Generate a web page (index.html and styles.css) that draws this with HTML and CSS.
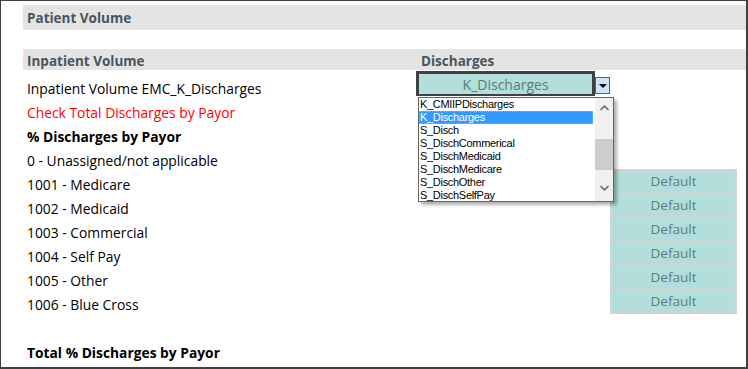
FILE: index.html
```html
<!DOCTYPE html>
<html lang="en">
<head>
    <meta charset="UTF-8">
    <title>Patient Volume</title>
    <link rel="stylesheet" href="styles.css">
</head>
<body>
    <div class="frame">
        <div class="band band-top">
            <span class="band-title">Patient Volume</span>
        </div>
        <div class="band band-sub">
            <span class="band-title col-a">Inpatient Volume</span>
            <span class="band-title col-b">Discharges</span>
        </div>

        <div class="row">
            <div class="label">Inpatient Volume EMC_K_Discharges</div>
            <div class="combo-wrap">
                <div class="combo-value">K_Discharges</div>
                <div class="combo-btn"><span class="tri"></span></div>
                <!-- open dropdown list -->
                <div class="drop-list">
                    <ul class="items">
                        <li>K_CMIIPDischarges</li>
                        <li class="selected">K_Discharges</li>
                        <li>S_Disch</li>
                        <li>S_DischCommerical</li>
                        <li>S_DischMedicaid</li>
                        <li>S_DischMedicare</li>
                        <li>S_DischOther</li>
                        <li>S_DischSelfPay</li>
                    </ul>
                    <div class="scrollbar">
                        <div class="sb-up">
                            <svg width="9" height="6" viewBox="0 0 9 6"><polyline points="0.5,5 4.5,1 8.5,5" fill="none" stroke="#606060" stroke-width="1.4"/></svg>
                        </div>
                        <div class="sb-thumb"></div>
                        <div class="sb-track"></div>
                        <div class="sb-down">
                            <svg width="9" height="6" viewBox="0 0 9 6"><polyline points="0.5,1 4.5,5 8.5,1" fill="none" stroke="#606060" stroke-width="1.4"/></svg>
                        </div>
                    </div>
                </div>
            </div>
        </div>
        <div class="row">
            <div class="label red">Check Total Discharges by Payor</div>
        </div>
        <div class="row">
            <div class="label bold">% Discharges by Payor</div>
        </div>
        <div class="row">
            <div class="label">0 - Unassigned/not applicable</div>
        </div>
        <div class="row">
            <div class="label">1001 - Medicare</div><div></div>
            <div class="default first">Default</div>
        </div>
        <div class="row">
            <div class="label">1002 - Medicaid</div><div></div>
            <div class="default">Default</div>
        </div>
        <div class="row">
            <div class="label">1003 - Commercial</div><div></div>
            <div class="default">Default</div>
        </div>
        <div class="row">
            <div class="label">1004 - Self Pay</div><div></div>
            <div class="default">Default</div>
        </div>
        <div class="row">
            <div class="label">1005 - Other</div><div></div>
            <div class="default">Default</div>
        </div>
        <div class="row">
            <div class="label">1006 - Blue Cross</div><div></div>
            <div class="default">Default</div>
        </div>
        <div class="row"></div>
        <div class="row">
            <div class="label bold">Total % Discharges by Payor</div>
        </div>
    </div>
</body>
</html>
```

FILE: styles.css
```css
html, body {
    margin: 0;
    padding: 0;
    background: #fff;
    font-family: "Open Sans", "Noto Sans", sans-serif;
    font-size: 13.85px;
    color: #000;
}
.frame {
    width: 748px;
    height: 369px;
    box-sizing: border-box;
    border-top: 1px solid #404040;
    border-left: 1px solid #404040;
    border-right: 2px solid #404040;
    border-bottom: 2px solid #404040;
    padding: 4px 0 0 22px;
    overflow: hidden;
}
/* Grey section bands */
.band {
    background: #e4e4e4;
    display: flex;
    align-items: center;
}
.band-top {
    height: 25px;
    margin-bottom: 19px;
}
.band-sub {
    height: 21px;
    margin-bottom: 3px;
    align-items: flex-end;
    box-sizing: border-box;
}
.band-title {
    color: #46555f;
    font-weight: bold;
    font-size: 13.5px;
    padding-left: 4px;
}
.band-sub .col-a {
    width: 389px;
}
.band-sub .col-b {
    padding-left: 5px;
}
/* Sheet rows */
.row {
    display: grid;
    grid-template-columns: 393px 194px 127px;
    height: 24px;
}
.label {
    padding: 6px 0 0 4px;
    line-height: 19px;
    white-space: nowrap;
}
.red { color: #ff0000; }
.bold { font-weight: bold; font-size: 13.8px; }
.default {
    background: #b2dfdb;
    color: #607d7b;
    text-align: center;
    font-size: 13.5px;
    line-height: 20px;
    padding-top: 2px;
    box-sizing: border-box;
    border-left: 2px solid #d3d3d3;
    border-right: 2px solid #d3d3d3;
    border-bottom: 2px solid #d3d3d3;
}
.default.first {
    border-top: 2px solid #d3d3d3;
    padding-top: 0;
}
/* Combo box with open list */
.combo-wrap {
    position: relative;
    display: flex;
    align-items: flex-start;
    margin-top: -2px;
    height: 26px;
}
.combo-value {
    width: 182px;
    height: 25px;
    box-sizing: border-box;
    border: 3px solid #404040;
    border-bottom-width: 2px;
    background: #b2dfdb;
    color: #5c7a78;
    text-align: center;
    font-size: 14px;
    line-height: 18px;
    padding-top: 2px;
}
.combo-btn {
    width: 15px;
    height: 17px;
    margin-top: 6px;
    box-sizing: border-box;
    border: 1px solid #0078d7;
    background: #cce4f7;
    display: flex;
    align-items: center;
    justify-content: center;
}
.tri {
    width: 0;
    height: 0;
    border-left: 4px solid transparent;
    border-right: 4px solid transparent;
    border-top: 4px solid #000;
}
.drop-list {
    position: absolute;
    left: 2px;
    top: 26px;
    width: 196px;
    height: 105px;
    box-sizing: border-box;
    border: 1px solid #646464;
    background: #fff;
    box-shadow: 3px 3px 3px rgba(0,0,0,0.3);
    display: flex;
    z-index: 10;
}
.items {
    list-style: none;
    margin: 0;
    padding: 0 2px 0 0;
    flex: 1;
    font-family: "Liberation Sans", Arial, sans-serif;
    font-size: 11px;
    letter-spacing: -0.3px;
}
.items li {
    height: 13px;
    line-height: 13px;
    padding-left: 1px;
    white-space: nowrap;
}
.items li.selected {
    background: #3399ff;
    color: #fff;
    outline: 1px dotted #e89a5a;
    outline-offset: -1px;
}
.scrollbar {
    width: 18px;
    background: #f0f0f0;
    display: flex;
    flex-direction: column;
}
.sb-up {
    height: 20px;
    display: flex;
    align-items: center;
    justify-content: center;
}
.sb-thumb {
    height: 31px;
    margin-top: 21px;
    background: #cdcdcd;
}
.sb-track { flex: 1; }
.sb-down {
    height: 26px;
    display: flex;
    align-items: center;
    justify-content: center;
}
```
